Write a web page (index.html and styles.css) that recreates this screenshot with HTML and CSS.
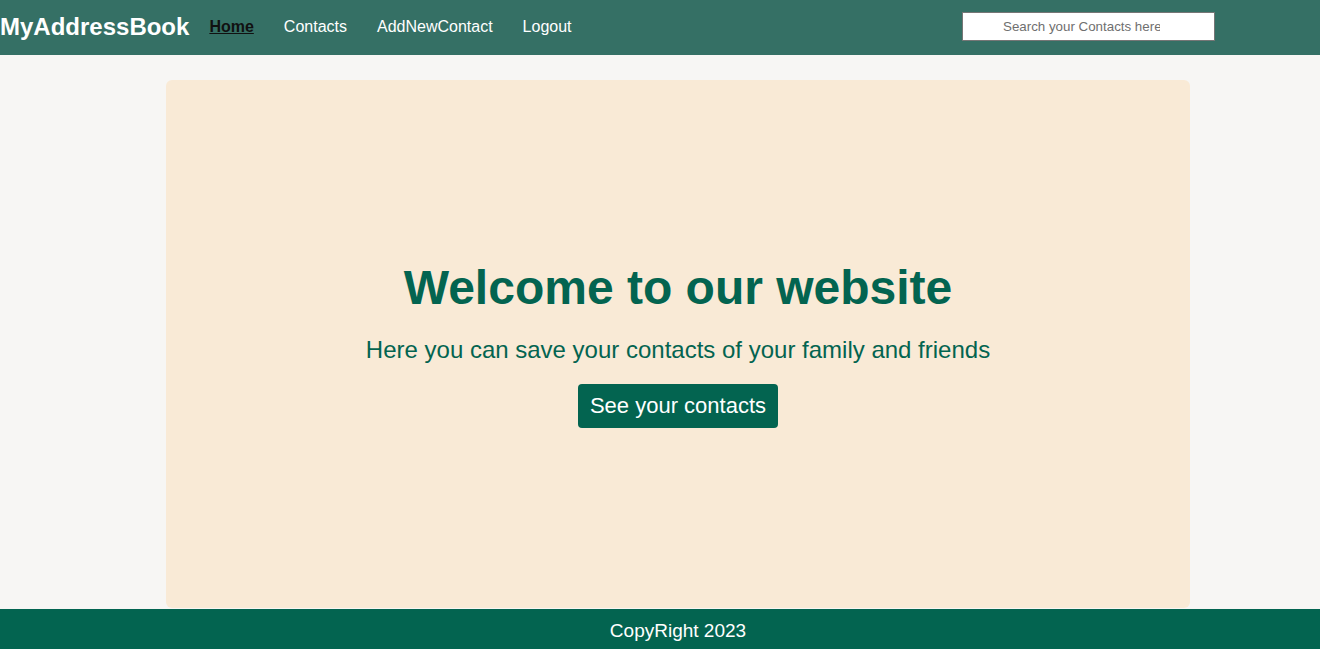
FILE: index.html
```html
<!DOCTYPE html>
<html lang="en">
<head>
<meta charset="utf-8">
<title>MyAddressBook</title>
<link rel="stylesheet" href="styles.css">
</head>
<body>
<header class="navbar">
  <a class="brand" href="#">MyAddressBook</a>
  <nav class="nav-links">
    <a class="nav-link active" href="#">Home</a>
    <a class="nav-link" href="#">Contacts</a>
    <a class="nav-link" href="#">AddNewContact</a>
    <a class="nav-link" href="#">Logout</a>
  </nav>
  <input class="search" type="text" placeholder="Search your Contacts here">
</header>
<main class="main">
  <section class="hero">
    <h1 class="hero-title">Welcome to our website</h1>
    <p class="hero-sub">Here you can save your contacts of your family and friends</p>
    <a class="hero-btn" href="#">See your contacts</a>
  </section>
</main>
<footer class="footer">CopyRight 2023</footer>
</body>
</html>
```

FILE: styles.css
```css
* { box-sizing: border-box; }
html, body { margin: 0; padding: 0; }
body {
  font-family: "Liberation Sans", Arial, sans-serif;
  background: #f7f6f4;
  height: 649px;
  overflow: hidden;
  display: flex;
  flex-direction: column;
}
.navbar {
  height: 55px;
  background: #357065;
  display: flex;
  align-items: center;
  flex-shrink: 0;
  padding: 0 105px 2px 0;
}
.brand {
  color: #ffffff;
  font-weight: bold;
  font-size: 24px;
  text-decoration: none;
  margin-right: 20px;
}
.nav-links {
  display: flex;
  gap: 30px;
}
.nav-link {
  color: #ffffff;
  font-size: 16px;
  text-decoration: none;
}
.nav-link.active {
  color: #111;
  font-weight: bold;
  text-decoration: underline;
}
.search {
  margin-left: auto;
  width: 253px;
  height: 29px;
  border: 1px solid #767676;
  background: #fff;
  font-family: "Liberation Sans", Arial, sans-serif;
  font-size: 13.33px;
  text-align: center;
  padding: 0 54px 0 40px;
}
.search::placeholder { color: #6f6f6f; }
.main {
  flex: 1;
  padding: 25px 0 0 166px;
  display: flex;
}
.hero {
  width: 1024px;
  height: 528px;
  background: #f9ead6;
  border-radius: 6px;
  display: flex;
  flex-direction: column;
  align-items: center;
  justify-content: center;
}
.hero-title {
  margin: 0;
  color: #036450;
  font-size: 48px;
  font-weight: bold;
}
.hero-sub {
  margin: 21px 0 20px;
  color: #036450;
  font-size: 24px;
}
.hero-btn {
  display: inline-flex;
  align-items: center;
  justify-content: center;
  width: 200px;
  height: 44px;
  background: #036450;
  color: #fff;
  font-size: 22px;
  text-decoration: none;
  border-radius: 4px;
}
.footer {
  height: 40px;
  flex-shrink: 0;
  background: #036450;
  color: #fff;
  font-size: 19px;
  display: flex;
  align-items: center;
  justify-content: center;
  padding: 4px 0 0 36px;
}
```
